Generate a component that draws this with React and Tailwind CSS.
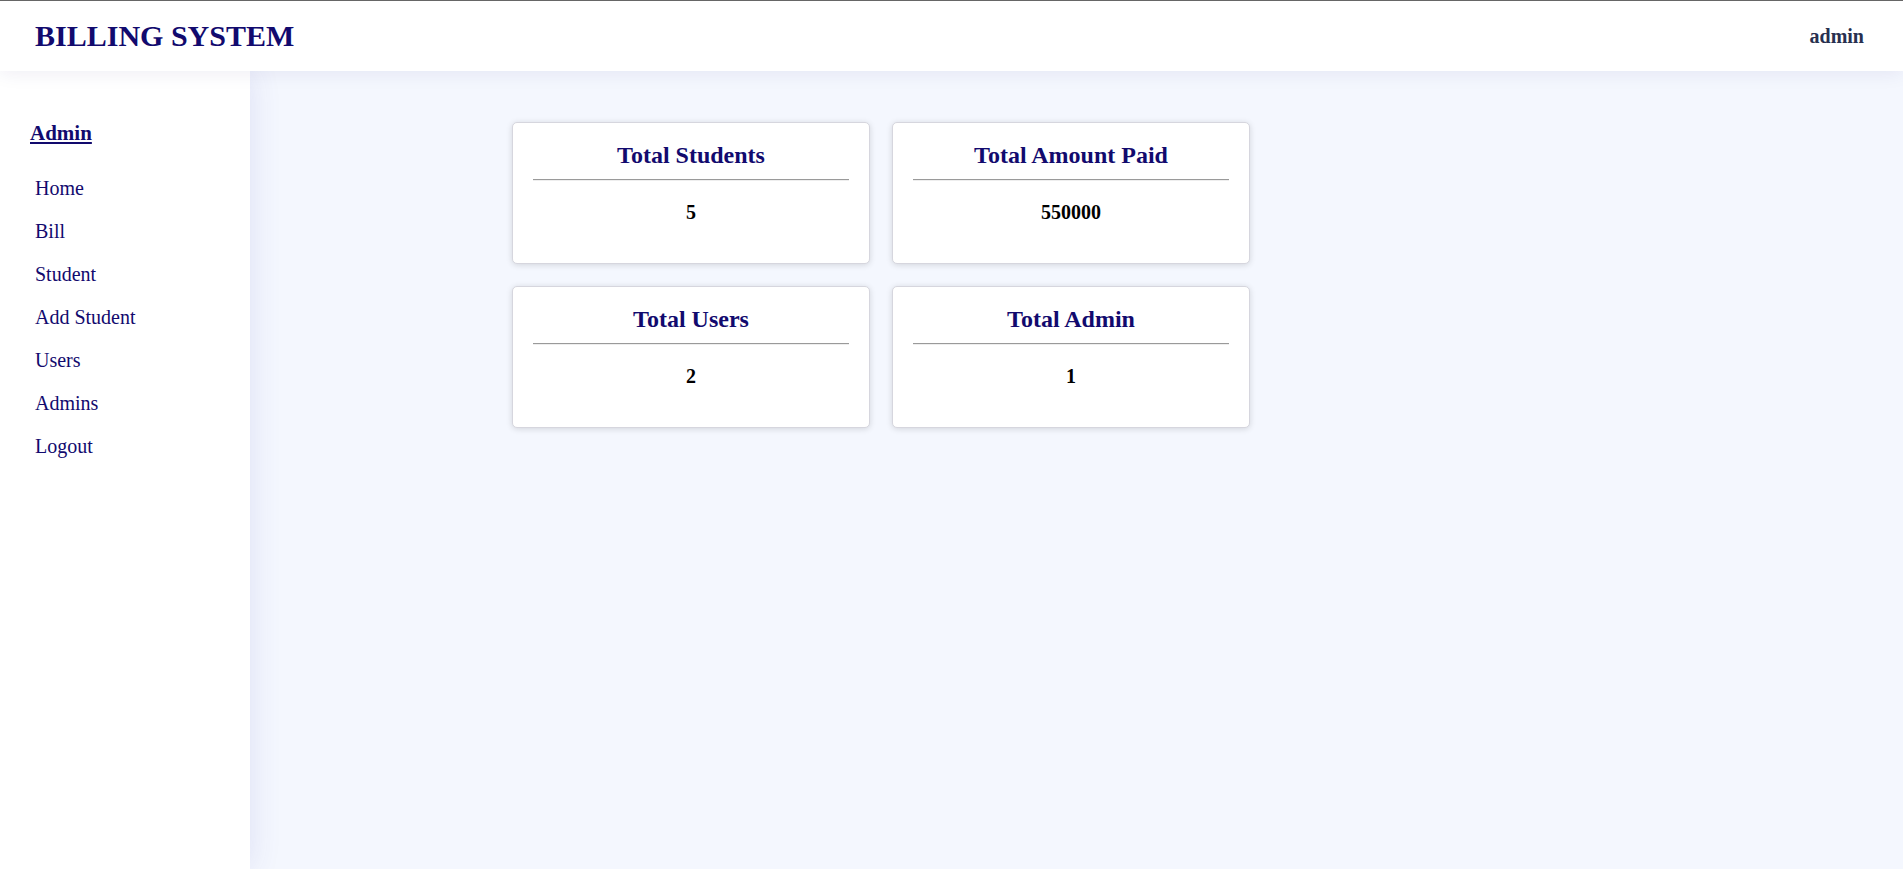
import React from "react";

const navItems = ["Home", "Bill", "Student", "Add Student", "Users", "Admins", "Logout"];

const stats = [
  { title: "Total Students", value: "5" },
  { title: "Total Amount Paid", value: "550000" },
  { title: "Total Users", value: "2" },
  { title: "Total Admin", value: "1" },
];

function StatCard({ title, value }) {
  return (
    <div className="h-[142px] bg-white border border-[#d6d6de] rounded-[5px] shadow-[0_1px_6px_rgba(0,0,0,0.14)] px-[20px] pt-[18px] text-center">
      <h3 className="text-[24px] leading-[28px] font-bold text-[#120a6e]">{title}</h3>
      <hr className="mt-[10px] border-t border-t-[#9a9a9a] border-b border-b-[#eeeeee]" />
      <div className="mt-[19px] text-[20px] leading-[24px] font-bold text-black">{value}</div>
    </div>
  );
}

export default function App() {
  return (
    <div className="min-h-screen flex flex-col bg-[#f4f7fe] font-['Liberation_Serif',serif]">
      <header className="relative z-20 h-[71px] bg-white border-t border-[#666666] flex items-center justify-between pl-[35px] pr-[39px] shadow-[0_2px_18px_rgba(40,30,120,0.08)]">
        <h1 className="text-[30px] leading-[36px] font-bold text-[#120a6e]">BILLING SYSTEM</h1>
        <span className="text-[20px] leading-[24px] font-bold text-[#283050]">admin</span>
      </header>
      <div className="flex flex-1">
        <aside className="relative z-10 w-[250px] bg-white shadow-[0_0_30px_rgba(60,60,170,0.12)] pt-[50px]">
          <div className="pl-[30px] text-[21px] leading-[25px] font-bold text-[#120a6e] underline">Admin</div>
          <nav className="mt-[21px] flex flex-col">
            {navItems.map((item) => (
              <a key={item} href="#" className="pl-[35px] text-[20px] leading-[43px] text-[#120a6e]">
                {item}
              </a>
            ))}
          </nav>
        </aside>
        <main className="flex-1 pl-[262px] pt-[51px]">
          <div className="grid grid-cols-[358px_358px] gap-[22px]">
            {stats.map((s) => (
              <StatCard key={s.title} title={s.title} value={s.value} />
            ))}
          </div>
        </main>
      </div>
    </div>
  );
}
